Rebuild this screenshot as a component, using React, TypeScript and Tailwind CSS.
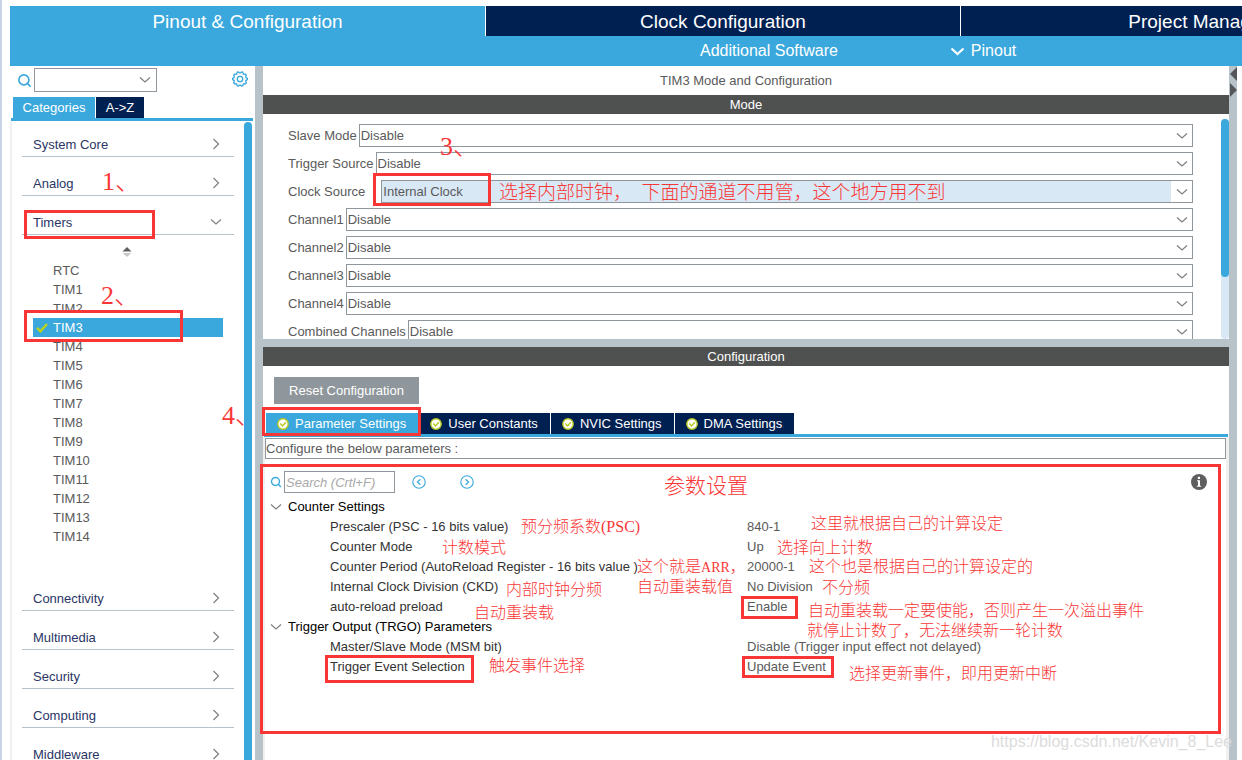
import clsx from "clsx";
import { Search } from "lucide-react";

const topTabs = ["Pinout & Configuration", "Clock Configuration", "Project Manager"];

const categoriesTop = ["System Core", "Analog", "Timers"];
const categoriesBottom = ["Connectivity", "Multimedia", "Security", "Computing", "Middleware"];

const timers = [
  "RTC", "TIM1", "TIM2", "TIM3", "TIM4", "TIM5", "TIM6", "TIM7",
  "TIM8", "TIM9", "TIM10", "TIM11", "TIM12", "TIM13", "TIM14",
];

const modeRows = [
  { label: "Slave Mode", value: "Disable" },
  { label: "Trigger Source", value: "Disable" },
  { label: "Clock Source", value: "Internal Clock", active: true },
  { label: "Channel1", value: "Disable" },
  { label: "Channel2", value: "Disable" },
  { label: "Channel3", value: "Disable" },
  { label: "Channel4", value: "Disable" },
  { label: "Combined Channels", value: "Disable" },
];

const configTabs = ["Parameter Settings", "User Constants", "NVIC Settings", "DMA Settings"];

const parameterGroups = [
  {
    title: "Counter Settings",
    rows: [
      ["Prescaler (PSC - 16 bits value)", "840-1"],
      ["Counter Mode", "Up"],
      ["Counter Period (AutoReload Register - 16 bits value )", "20000-1"],
      ["Internal Clock Division (CKD)", "No Division"],
      ["auto-reload preload", "Enable"],
    ],
  },
  {
    title: "Trigger Output (TRGO) Parameters",
    rows: [
      ["Master/Slave Mode (MSM bit)", "Disable (Trigger input effect not delayed)"],
      ["Trigger Event Selection", "Update Event"],
    ],
  },
];

const markerBoxes = [
  "left-[24px] top-[210px] h-[29px] w-[131px]",
  "left-[24px] top-[310px] h-[32px] w-[159px]",
  "left-[373px] top-[173px] h-[33px] w-[118px]",
  "left-[262px] top-[407px] h-[29px] w-[159px]",
  "left-[260px] right-[21px] top-[464px] h-[270px]",
  "left-[741px] top-[596px] h-[23px] w-[57px]",
  "left-[325px] top-[655px] h-[28px] w-[149px]",
  "left-[742px] top-[656px] h-[22px] w-[92px]",
];

const notes = [
  { text: "1、", place: "left-[102px] top-[168px] text-[26px] leading-7" },
  { text: "2、", place: "left-[101px] top-[282px] text-[26px] leading-7" },
  { text: "3、", place: "left-[440px] top-[133px] text-[26px] leading-7" },
  { text: "4、", place: "left-[222px] top-[402px] text-[26px] leading-7" },
  {
    text: "选择内部时钟，\u00a0\u00a0下面的通道不用管，这个地方用不到",
    place: "left-[499px] top-[183px] text-[19px] leading-5",
  },
  { text: "参数设置", place: "left-[664px] top-[476px] text-[21px] leading-5" },
  { text: "预分频系数(PSC)", place: "left-[521px] top-[517px] text-base leading-5" },
  { text: "计数模式", place: "left-[442px] top-[538px] text-base leading-5" },
  {
    text: (
      <>
        这个就是<span className="text-sm leading-5">ARR</span>，
      </>
    ),
    place: "left-[637px] top-[557px] text-base leading-5",
  },
  { text: "自动重装载值", place: "left-[637px] top-[577px] text-base leading-5" },
  { text: "内部时钟分频", place: "left-[506px] top-[580px] text-base leading-5" },
  { text: "自动重装载", place: "left-[474px] top-[603px] text-base leading-5" },
  { text: "触发事件选择", place: "left-[489px] top-[656px] text-base leading-5" },
  { text: "这里就根据自己的计算设定", place: "left-[811px] top-[514px] text-base leading-5" },
  { text: "选择向上计数", place: "left-[777px] top-[538px] text-base leading-5" },
  { text: "这个也是根据自己的计算设定的", place: "left-[809px] top-[557px] text-base leading-5" },
  { text: "不分频", place: "left-[822px] top-[578px] text-base leading-5" },
  { text: "自动重装载一定要使能，否则产生一次溢出事件", place: "left-[808px] top-[601px] text-base leading-5" },
  { text: "就停止计数了，无法继续新一轮计数", place: "left-[807px] top-[621px] text-base leading-5" },
  { text: "选择更新事件，即用更新中断", place: "left-[849px] top-[664px] text-base leading-5" },
];

const ChevronDown = () => (
  <svg width="12" height="8" viewBox="0 0 12 8" fill="none" stroke="#7f7f7f">
    <path d="M1 1.5 L6 6 L11 1.5" strokeWidth="1.2" />
  </svg>
);

const ChevronRight = () => (
  <svg width="8" height="12" viewBox="0 0 8 12" fill="none" stroke="#7f7f7f">
    <path d="M1.5 1 L6.5 6 L1.5 11" strokeWidth="1.2" />
  </svg>
);

const gearPoints = Array.from({ length: 40 }, (_, i) => {
  const r = i % 4 < 2 ? 7.4 : 6.1;
  const a = ((i - 0.5) / 40) * Math.PI * 2;
  return `${(8 + r * Math.cos(a)).toFixed(2)},${(8 + r * Math.sin(a)).toFixed(2)}`;
}).join(" ");

const Gear = () => (
  <svg width="16" height="16" viewBox="0 0 16 16" fill="none" stroke="#3aa8dc">
    <polygon points={gearPoints} strokeWidth="1.3" strokeLinejoin="round" />
    <circle cx="8" cy="8" r="2.7" strokeWidth="1.3" />
  </svg>
);

const CheckBadge = () => (
  <svg width="12" height="12" viewBox="0 0 12 12" fill="none">
    <circle cx="6" cy="6" r="5.2" fill="#fff" stroke="#b9c920" strokeWidth="1.4" />
    <path d="M3.3 5.6 L5.5 7.9 L8.8 4.3" stroke="#b9c920" strokeWidth="1.5" />
  </svg>
);

const CircleArrow = ({ d }: { d: string }) => (
  <svg width="14" height="14" viewBox="0 0 14 14" fill="none" stroke="#3aa8dc">
    <circle cx="7" cy="7" r="6.2" strokeWidth="1.1" />
    <path d={d} strokeWidth="1.2" />
  </svg>
);

const Category = ({ name }: { name: string }) => (
  <button className="flex items-center justify-between border-b border-[#b8c3c9] pb-px pl-[11px] pr-3 text-left leading-5 text-[#2a3566]">
    {name}
    <span className="flex w-3 justify-center pb-0.5">{name === "Timers" ? <ChevronDown /> : <ChevronRight />}</span>
  </button>
);

const Header = () => (
  <header className="shrink-0 bg-[#3aa8dc] text-white">
    <nav className="flex overflow-hidden text-[19px]">
      {topTabs.map((t, i) => (
        <button
          key={t}
          className={clsx("h-[30px] shrink-0 basis-[475px] pt-0.5", i > 0 && "border-l border-white bg-[#002052]")}
        >
          {t}
        </button>
      ))}
    </nav>
    <div className="flex h-[30px] items-center gap-[112px] pl-[690px] text-base">
      <button>Additional Software</button>
      <button className="flex items-center gap-1.5">
        <svg width="15" height="9" viewBox="0 0 15 9" fill="none" stroke="#fff">
          <path d="M1.5 1.5 L7.5 7 L13.5 1.5" strokeWidth="2.2" />
        </svg>
        Pinout
      </button>
    </div>
  </header>
);

const Sidebar = () => (
  <aside className="flex w-[245px] shrink-0 flex-col pr-0.5">
    <div className="flex h-7 items-center pl-[7px] pr-[5px]">
      <Search className="h-[15px] w-[15px] text-[#3aa8dc]" strokeWidth={2.6} />
      <label className="ml-0.5 flex h-6 w-[123px] items-center border border-[#8f979c] pr-[5px]">
        <select aria-label="Search peripheral" className="h-full min-w-0 flex-1 appearance-none outline-none">
          <option></option>
        </select>
        <ChevronDown />
      </label>
      <button aria-label="Settings" className="mb-0.5 ml-auto">
        <Gear />
      </button>
    </div>
    <div className="mt-[3px] flex gap-px pl-[3px] text-white">
      <button className="h-[21px] w-[82px] bg-[#3aa8dc]">Categories</button>
      <button className="h-[21px] w-12 bg-[#002052]">A-&gt;Z</button>
    </div>
    <div className="ml-px h-[3px] bg-[#3aa8dc]" />
    <div className="flex min-h-0 flex-1 overflow-hidden border-l-2 border-[#f0f0f0]">
      <div className="flex flex-1 flex-col gap-[17px] pl-2.5 pt-3.5">
        {categoriesTop.map((c) => (
          <Category key={c} name={c} />
        ))}
        <div className="-mt-[5px] mb-[26px] flex flex-col">
          <svg width="10" height="10" viewBox="0 0 10 10" className="ml-[100px] self-start">
            <path d="M5 0 L9.5 4.5 H0.5 Z" fill="#5f5f5f" />
            <path d="M5 10 L9.5 6 H0.5 Z" fill="#c8c8c8" />
          </svg>
          <ul className="ml-[11px] mr-[11px] mt-1 text-[#5a5a5a]">
            {timers.map((t) => (
              <li key={t}>
                <button
                  className={clsx(
                    "flex h-[19px] w-full items-center text-left",
                    t === "TIM3" ? "bg-[#3aa8dc] pl-[3px] text-white" : "pl-5"
                  )}
                >
                  {t === "TIM3" && (
                    <svg width="12" height="10" viewBox="0 0 12 10" fill="none" className="mr-[5px]">
                      <path d="M1 4.8 L4.4 8.4 L11 1" stroke="#b9d21e" strokeWidth="2.4" />
                    </svg>
                  )}
                  {t}
                </button>
              </li>
            ))}
          </ul>
        </div>
        {categoriesBottom.map((c) => (
          <Category key={c} name={c} />
        ))}
      </div>
      <div className="ml-2.5 mr-px mt-px w-2 rounded-t-full bg-[#3aa8dc]" />
    </div>
  </aside>
);

const ModePanel = () => (
  <section className="flex h-[225px] shrink-0 overflow-hidden">
    <div className="flex flex-1 flex-col gap-[5px] pl-[25px] pt-2.5">
      {modeRows.map((r) => (
        <div key={r.label} className={clsx("flex h-[23px] shrink-0 items-center", r.active ? "gap-4" : "gap-0.5")}>
          <label htmlFor={r.label}>{r.label}</label>
          <div className="flex h-full flex-1 items-center border border-[#8f979c]">
            <select
              id={r.label}
              className={clsx("h-full min-w-0 flex-1 appearance-none pl-px outline-none", r.active && "bg-[#d9e8f5]")}
            >
              <option>{r.value}</option>
            </select>
            <span className="flex w-[21px] justify-center">
              <ChevronDown />
            </span>
          </div>
        </div>
      ))}
    </div>
    <div className="ml-7 mt-[5px] w-2 rounded-full bg-[#d9e8f5]">
      <div className="h-[158px] rounded-full bg-[#3aa8dc]" />
    </div>
  </section>
);

const ConfigPanel = () => (
  <section className="flex min-h-0 flex-1 flex-col pt-[11px]">
    <button className="ml-[11px] h-[27px] w-[145px] shrink-0 bg-[#8f979c] text-white">Reset Configuration</button>
    <div className="mt-[9px] flex gap-px pl-[3px] text-white">
      {configTabs.map((t, i) => (
        <button
          key={t}
          className={clsx(
            "flex h-[21px] items-center gap-1.5 pl-[11px] pr-3",
            i === 0 ? "bg-[#3aa8dc]" : "bg-[#002052]"
          )}
        >
          <CheckBadge />
          {t}
        </button>
      ))}
    </div>
    <div className="ml-px mr-px h-[3px] shrink-0 bg-[#3aa8dc]" />
    <div className="flex min-h-0 flex-1 flex-col border-l-2 border-r-[3px] border-[#f0f0f0] pt-px">
      <p className="h-[21px] shrink-0 border border-[#8f979c] leading-5">Configure the below parameters :</p>
      <div className="mt-3 flex h-[22px] shrink-0 items-center pl-[5px] pr-[19px]">
        <Search className="h-3 w-3 text-[#3aa8dc]" strokeWidth={2.8} />
        <input
          type="text"
          aria-label="Search parameters"
          placeholder="Search (Crtl+F)"
          className="ml-0.5 h-full w-[111px] border border-[#8f979c] px-px italic outline-none placeholder:text-[#a9a9a9]"
        />
        <button aria-label="Previous" className="ml-[17px]">
          <CircleArrow d="M8.4 4.2 L5.4 7 L8.4 9.8" />
        </button>
        <button aria-label="Next" className="ml-[34px]">
          <CircleArrow d="M5.6 4.2 L8.6 7 L5.6 9.8" />
        </button>
        <button aria-label="Information" className="ml-auto">
          <svg width="16" height="16" viewBox="0 0 16 16" fill="#fff">
            <circle cx="8" cy="8" r="8" fill="#5f5f5f" />
            <rect x="6.8" y="2.8" width="2.2" height="2.2" />
            <path d="M6 6.2 H9 V11.8 H10.2 V12.8 H5.8 V11.8 H7 V7.2 H6 Z" />
          </svg>
        </button>
      </div>
      <table className="mt-1 w-full table-fixed text-left leading-5">
        <colgroup>
          <col className="w-[482px]" />
          <col />
        </colgroup>
        {parameterGroups.map((g) => (
          <tbody key={g.title}>
            <tr>
              <th colSpan={2} className="p-0 pl-[5px] font-normal text-black">
                <span className="flex items-center gap-1.5">
                  <ChevronDown />
                  {g.title}
                </span>
              </th>
            </tr>
            {g.rows.map(([name, value]) => (
              <tr key={name}>
                <td className="p-0 pl-[65px] text-[#333333]">{name}</td>
                <td className="p-0">{value}</td>
              </tr>
            ))}
          </tbody>
        ))}
      </table>
    </div>
  </section>
);

const Notes = () => (
  <div className="pointer-events-none absolute inset-y-0 -left-0.5 right-0 overflow-hidden">
    {markerBoxes.map((b) => (
      <div key={b} className={clsx("absolute border-3 border-[#f93636]", b)} />
    ))}
    {notes.map((n) => (
      <span
        key={n.place}
        className={clsx(
          "absolute whitespace-nowrap font-['Liberation_Serif','Noto_Sans_CJK_SC',serif] font-light text-[#f93636]",
          n.place
        )}
      >
        {n.text}
      </span>
    ))}
    <span className="absolute bottom-2 right-2.5 text-base leading-5 text-[#dcdcdc]">
      https://blog.csdn.net/Kevin_8_Lee
    </span>
  </div>
);

const App = () => {
  return (
    <div className="relative flex h-screen flex-col overflow-hidden border-l-2 border-[#c9d3e8] bg-white pl-2 pt-1.5 font-['Liberation_Sans',Arial,sans-serif] text-[13px] text-[#5a5a5a]">
      <Header />
      <div className="flex min-h-0 flex-1">
        <Sidebar />
        <div className="w-2 shrink-0 bg-[#b8c3c9]" />
        <main className="flex min-w-0 flex-1 flex-col">
          <h1 className="h-[29px] shrink-0 text-center leading-[29px]">TIM3 Mode and Configuration</h1>
          <h2 className="h-[19px] shrink-0 bg-[#4f5150] text-center leading-[19px] text-white">Mode</h2>
          <ModePanel />
          <div className="h-2 shrink-0 bg-[#b8c3c9]" />
          <h2 className="h-[19px] shrink-0 bg-[#4f5150] text-center leading-[19px] text-white">Configuration</h2>
          <ConfigPanel />
        </main>
        <div className="mr-[5px] w-2 shrink-0 bg-[#b8c3c9]">
          <svg width="8" height="32" viewBox="0 0 8 32" fill="#55565a">
            <path d="M8 1 V15 L1 8 Z" />
            <path d="M1 17 V31 L8 24 Z" />
          </svg>
        </div>
      </div>
      <Notes />
    </div>
  );
};

export default App;
